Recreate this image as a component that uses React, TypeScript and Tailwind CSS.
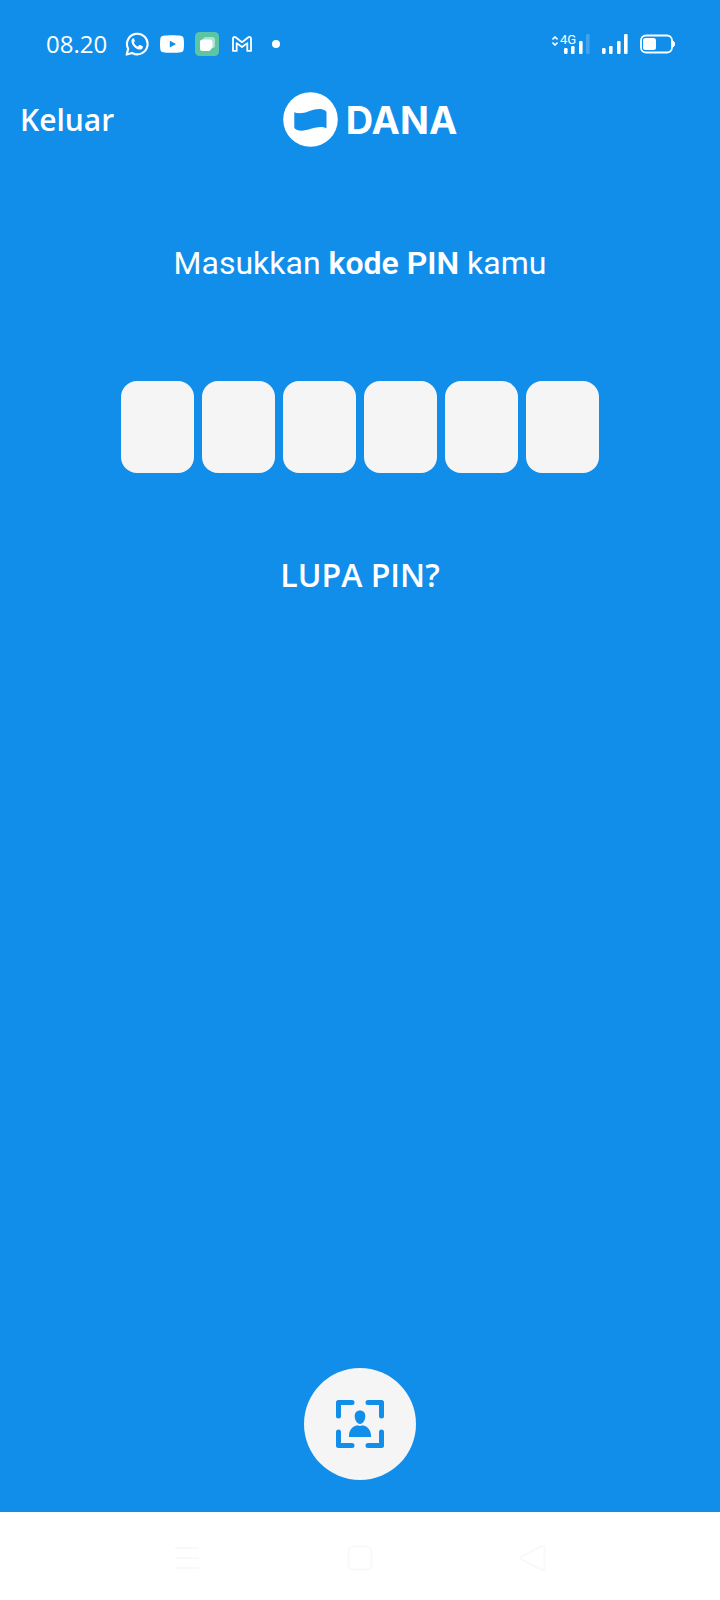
import { useRef, useState } from "react";

const statusBars = [
  { x: 0, y: 14, h: 6 },
  { x: 7, y: 12, h: 8 },
  { x: 15, y: 7, h: 13 },
  { x: 22, y: 0, h: 20 },
];

function SignalBars({ weak = false }: { weak?: boolean }) {
  return (
    <svg width="26" height="20" viewBox="0 0 26 20" fill="white" aria-hidden="true">
      {statusBars.map((b, i) => (
        <rect key={b.x} x={b.x} y={b.y} width="3.6" height={b.h} rx="1.2" opacity={weak && i === 3 ? 0.2 : 1} />
      ))}
    </svg>
  );
}

function StatusBar() {
  return (
    <div className="flex h-22 items-center justify-between pr-[45px] pl-[46px]">
      <div className="flex items-center">
        <span className="text-2xl leading-8">08.20</span>
        <svg className="ml-[18px]" width="24" height="24" viewBox="0 0 24 24" fill="none" aria-label="WhatsApp">
          <path d="M1.6 22.6 3.2 16.9A10.3 10.3 0 1 1 7.2 21Z" stroke="white" strokeWidth="2.1" strokeLinejoin="round" />
          <path
            d="M8.1 6.2c-.5 0-1.700 1.100-1.700 2.800 0 4 4.700 8.600 8.300 8.600 1.900 0 3.200-1.200 3.200-2.700 0-.5-.2-.7-.6-.9l-2.200-1c-.4-.2-.7-.1-1 .3l-.8 1c-.3.3-.5.300-.9.100-1.500-.7-2.700-1.900-3.400-3.300-.2-.4 0-.6.200-.9.600-.7.800-1 .6-1.400L9 6.700c-.2-.4-.4-.5-.9-.5Z"
            fill="white"
          />
        </svg>
        <svg className="ml-[11px]" width="24" height="18" viewBox="0 0 24 18" aria-label="YouTube">
          <path
            d="M3.200.7C7 0 17 0 20.800.7c2 .3 2.700 1.500 2.900 3.300.4 3 .4 7 0 10-.2 1.800-.9 3-2.900 3.300-3.800.7-13.800.7-17.600 0C1.200 17 .5 15.800.3 14c-.4-3-.4-7 0-10C.5 2.200 1.200 1 3.200.7Z"
            fill="white"
          />
          <path d="m9.800 5.800 6.200 3.300-6.200 3.300Z" fill="#118eea" />
        </svg>
        <svg className="ml-[11px]" width="24" height="24" viewBox="0 0 24 24" aria-hidden="true">
          <rect width="24" height="24" rx="4.500" fill="#5cc6a4" />
          <rect x="8" y="5" width="12" height="11" rx="2.500" fill="#aee2d2" />
          <path d="M7.500 7.500H15a2.500 2.500 0 0 1 2.500 2.500v5.500l-3 3.500H7.500A2.500 2.500 0 0 1 5 16.500V10a2.500 2.500 0 0 1 2.500-2.500Z" fill="white" />
        </svg>
        <svg className="ml-[13px]" width="20" height="16" viewBox="0 0 20 16" fill="none" stroke="white" strokeWidth="1.800" strokeLinejoin="round" aria-label="Gmail">
          <path d="M1 2.500C1 .9 2.600.6 3.600 1.300L10 6.200l6.400-4.900c1-.7 2.600-.4 2.600 1.200v12.400h-3.700V7.100L10 11 4.700 7.100v7.800H1Z" />
        </svg>
        <span className="ml-5 size-2 rounded-full bg-white" />
      </div>
      <div className="flex items-center">
        <div className="relative flex h-5 w-[38px] items-end justify-end">
          <svg className="absolute top-0.5 left-0" width="6" height="10" viewBox="0 0 6 10" fill="none" stroke="white" strokeWidth="1.600" aria-hidden="true">
            <path d="M.5 3.400 3 1l2.500 2.400M.5 6.600 3 9l2.500-2.400" />
          </svg>
          <span className="absolute -top-px left-2 font-['Roboto',sans-serif] text-[13px] leading-[14px]">4G</span>
          <SignalBars weak />
        </div>
        <div className="ml-3 flex">
          <SignalBars />
        </div>
        <svg className="ml-3" width="35" height="20" viewBox="0 0 35 20" aria-label="Battery">
          <rect x="1" y="1.500" width="31" height="17" rx="5" fill="none" stroke="white" strokeWidth="1.800" />
          <rect x="3" y="4" width="13" height="12" rx="2.500" fill="white" />
          <path d="M32.500 6.500a4 4 0 0 1 0 7Z" fill="white" stroke="white" />
        </svg>
      </div>
    </div>
  );
}

function DanaLogo() {
  return (
    <div className="flex items-center gap-2">
      <svg width="55" height="55" viewBox="0 0 55 55" aria-hidden="true">
        <circle cx="27.500" cy="27.500" r="27.300" fill="white" />
        <path
          d="M11.300 20.300c3.500 1.700 9.500 1.200 15.200-1.200 6-2.500 12.500-3.200 16-.3.700.6 1 1 1 1.800v15.800c-4-2.300-9-1.600-15.500.4-5.500 1.800-12 3-15.600.2-.8-.6-1.100-1-1.100-2Z"
          fill="#118eea"
        />
      </svg>
      <span className="font-['Inter',sans-serif] text-[38px] leading-[54px] font-bold">DANA</span>
    </div>
  );
}

function PinForm() {
  const [digits, setDigits] = useState<string[]>(Array(6).fill(""));
  const boxes = useRef<(HTMLInputElement | null)[]>([]);

  const update = (index: number, value: string) => {
    const digit = value.replace(/\D/g, "").slice(-1);
    setDigits((prev) => prev.map((d, i) => (i === index ? digit : d)));
    if (digit) boxes.current[index + 1]?.focus();
  };

  return (
    <form className="flex flex-col items-center" onSubmit={(e) => e.preventDefault()}>
      <h1 className="font-['Roboto',sans-serif] text-[32px] leading-10">
        Masukkan <b className="font-semibold">kode PIN</b> kamu
      </h1>
      <div className="mt-[98px] flex gap-2">
        {digits.map((digit, i) => (
          <input
            key={i}
            ref={(el) => {
              boxes.current[i] = el;
            }}
            type="password"
            inputMode="numeric"
            aria-label={`Digit PIN ${i + 1}`}
            value={digit}
            onChange={(e) => update(i, e.target.value)}
            className="h-[92px] w-[73px] rounded-2xl bg-[#f5f5f5] text-center text-4xl text-[#118eea] outline-none"
          />
        ))}
      </div>
      <button type="button" className="mt-20 text-[32px] leading-11 font-semibold">
        LUPA PIN?
      </button>
    </form>
  );
}

function NavigationBar() {
  return (
    <nav className="flex h-22 items-center justify-around bg-white px-[14%] pt-1 text-[#f9f9f9]">
      <button type="button" aria-label="Menu">
        <svg width="26" height="26" viewBox="0 0 26 26" fill="none" stroke="currentColor" strokeWidth="2">
          <path d="M1 3h24M1 13h24M1 23h24" />
        </svg>
      </button>
      <button type="button" aria-label="Home">
        <svg width="26" height="26" viewBox="0 0 26 26" fill="none" stroke="currentColor" strokeWidth="2">
          <rect x="1.500" y="1.500" width="23" height="23" rx="5" />
        </svg>
      </button>
      <button type="button" aria-label="Kembali">
        <svg width="26" height="26" viewBox="0 0 26 26" fill="none" stroke="currentColor" strokeWidth="2" strokeLinejoin="round">
          <path d="M1.500 11.700 21.500 1Q24.500.200 24.500 3v20q0 2.800-3 2L1.500 14.300Q.300 13 1.500 11.700Z" />
        </svg>
      </button>
    </nav>
  );
}

export default function App() {
  return (
    <div className="flex min-h-screen flex-col bg-[#118eea] font-['Open_Sans',sans-serif] text-white">
      <StatusBar />
      <header className="grid grid-cols-[1fr_auto_1fr] items-center pt-1 pl-5">
        <button type="button" className="justify-self-start text-[30px] leading-10 font-semibold">
          Keluar
        </button>
        <DanaLogo />
      </header>
      <main className="flex flex-1 flex-col items-center justify-between pt-24 pb-8">
        <PinForm />
        <button type="button" aria-label="Masuk dengan wajah" className="flex size-28 items-center justify-center rounded-full bg-[#f5f5f5]">
          <svg width="48" height="48" viewBox="0 0 48 48" fill="none" aria-hidden="true">
            <path
              d="M2.500 16V2.500H16M32 2.500h13.500V16M45.500 32v13.500H32M16 45.500H2.500V32"
              stroke="#118eea"
              strokeWidth="5"
              strokeLinecap="round"
              strokeLinejoin="round"
            />
            <path d="M24 10.500c3.200 0 5.300 2.200 5.300 5.500 0 4-2.300 8-5.300 8s-5.300-4-5.300-8c0-3.300 2.100-5.500 5.300-5.500Z" fill="#118eea" />
            <path d="M13 37v-1.500C13 30 17 26 21.500 25.300q2.500 1 5 0C31 26 35 30 35 35.500V37Z" fill="#118eea" />
          </svg>
        </button>
      </main>
      <NavigationBar />
    </div>
  );
}
